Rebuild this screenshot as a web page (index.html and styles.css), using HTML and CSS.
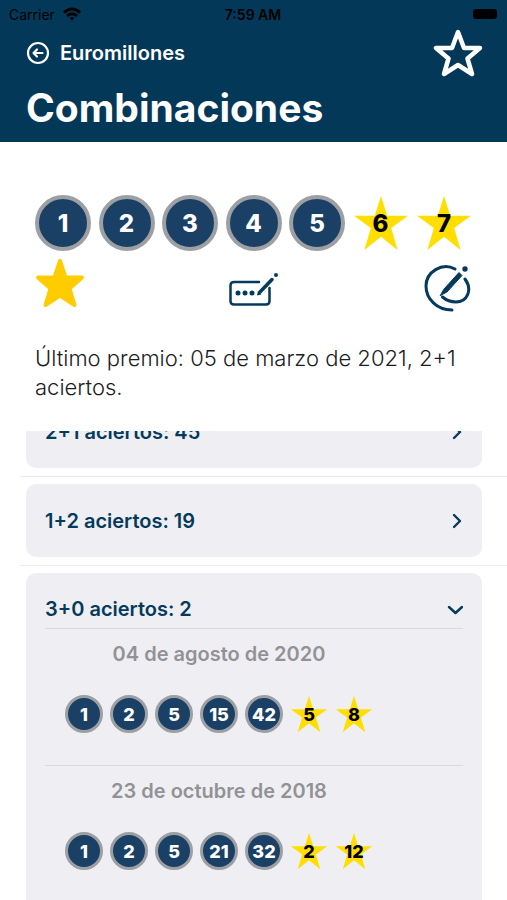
FILE: index.html
```
<!DOCTYPE html>
<html lang="es">
<head>
    <meta charset="UTF-8">
    <meta name="viewport" content="width=device-width, initial-scale=1.0">
    <title>Euromillones - Combinaciones</title>
    <link rel="stylesheet" href="styles.css">
</head>
<body>
    <!-- Shared star shape for the lucky numbers -->
    <svg class="defs" aria-hidden="true">
        <symbol id="star" viewBox="0 0 55 55">
            <path d="M27.500 1 L33.600 20.500 H54 L37.500 32.500 L43.800 54 L27.500 41 L11.200 54 L17.500 32.500 L1 20.500 H21.400 Z" fill="#ffde00"/>
        </symbol>
    </svg>

    <div class="app">
        <header class="header">
            <div class="status-bar">
                <span class="carrier">
                    Carrier
                    <svg width="18" height="14" viewBox="0 0 18 14" fill="none" stroke="#000" stroke-width="3">
                        <path d="M1 5.500 Q9 -1.500 17 5.500"/>
                        <path d="M4 9 Q9 4.500 14 9"/>
                        <path d="M6.500 11 Q9 8.800 11.500 11 L9 13.800 Z" fill="#000" stroke="none"/>
                    </svg>
                </span>
                <span class="clock">7:59 AM</span>
                <span class="battery"></span>
            </div>
            <div class="nav">
                <a class="back" href="#">
                    <svg width="24" height="24" viewBox="0 0 24 24" fill="none" stroke="#fff" stroke-width="2.200" stroke-linecap="round" stroke-linejoin="round">
                        <circle cx="12" cy="12" r="10"/>
                        <path d="M16.500 12 H7.500 M11 8.500 L7.500 12 L11 15.500"/>
                    </svg>
                    Euromillones
                </a>
                <button class="icon-btn" type="button" aria-label="Favoritos">
                    <svg width="50" height="48" viewBox="0 0 50 48" fill="none" stroke="#fff" stroke-width="4.500" stroke-linejoin="round">
                        <path d="M25 3 L31 19 H47 L34.500 29.500 L39 45 L25 36 L11 45 L15.500 29.500 L3 19 H19 Z"/>
                    </svg>
                </button>
            </div>
            <h1>Combinaciones</h1>
        </header>

        <section class="current">
            <div class="numbers">
                <span class="ball">1</span>
                <span class="ball">2</span>
                <span class="ball">3</span>
                <span class="ball">4</span>
                <span class="ball">5</span>
                <span class="star"><svg><use href="#star"/></svg><b>6</b></span>
                <span class="star"><svg><use href="#star"/></svg><b>7</b></span>
            </div>
            <div class="actions">
                <button class="icon-btn" type="button" aria-label="Guardar favorita">
                    <svg width="50" height="54" viewBox="0 0 50 54" fill="#ffcc00" stroke="#ffcc00" stroke-width="4" stroke-linejoin="round">
                        <path d="M25 3 L30.500 19.500 H47 L34.500 30.500 L39.500 47 L25 37.500 L10.500 47 L15.500 30.500 L3 19.500 H19.500 Z"/>
                    </svg>
                </button>
                <button class="icon-btn" type="button" aria-label="Editar números">
                    <svg width="50" height="54" viewBox="0 -4 50 54" fill="none" stroke="#053a5c" stroke-width="2.500" stroke-linecap="round">
                        <path d="M30 20 H5 Q1.500 20 1.500 23.500 V39 Q1.500 42.500 5 42.500 H37 Q40.500 42.500 40.500 39 V26"/>
                        <path d="M31 30 L43 17.500" stroke-width="3.500"/>
                        <g fill="#053a5c" stroke="none">
                            <path d="M28 33.500 L29 29 L32.500 32.500 Z"/>
                            <circle cx="9" cy="31" r="2.500"/>
                            <circle cx="16" cy="31" r="2.500"/>
                            <circle cx="23" cy="31" r="2.500"/>
                            <circle cx="47" cy="13" r="2"/>
                        </g>
                    </svg>
                </button>
                <button class="icon-btn" type="button" aria-label="Firmar">
                    <svg width="50" height="54" viewBox="0 -4 50 54" fill="none" stroke="#053a5c" stroke-width="3" stroke-linecap="round">
                        <path d="M33 7 C20 0 4 10 4 24 C4 37 15 48 30 48"/>
                        <path d="M43 17 C51 28 45 40 34 40 C29 40 24 38 20.500 35"/>
                        <path d="M22 27 L37 10.500 L40 13.500 L25 30 L18.500 33.500 Z" fill="#053a5c" stroke-width="1"/>
                        <circle cx="43" cy="7" r="2.700" fill="#053a5c" stroke="none"/>
                    </svg>
                </button>
            </div>
            <p class="last-prize">Último premio: 05 de marzo de 2021, 2+1 aciertos.</p>
        </section>

        <ul class="results">
            <li>
                <div class="card">
                    <button class="card-title" type="button">
                        2+1 aciertos: 45
                        <svg width="16" height="16" viewBox="0 0 16 16"><path d="M7 2 L13 8 L7 14"/></svg>
                    </button>
                </div>
            </li>
            <li>
                <div class="card">
                    <button class="card-title" type="button">
                        1+2 aciertos: 19
                        <svg width="16" height="16" viewBox="0 0 16 16"><path d="M7 2 L13 8 L7 14"/></svg>
                    </button>
                </div>
            </li>
            <li>
                <div class="card">
                    <button class="card-title" type="button" aria-expanded="true">
                        3+0 aciertos: 2
                        <svg width="16" height="16" viewBox="0 0 16 16"><path d="M2 6 L8.500 12 L15 6"/></svg>
                    </button>
                    <div class="draw">
                        <h2>04 de agosto de 2020</h2>
                        <div class="numbers small">
                            <span class="ball">1</span>
                            <span class="ball">2</span>
                            <span class="ball">5</span>
                            <span class="ball">15</span>
                            <span class="ball">42</span>
                            <span class="star"><svg><use href="#star"/></svg><b>5</b></span>
                            <span class="star"><svg><use href="#star"/></svg><b>8</b></span>
                        </div>
                    </div>
                    <div class="draw">
                        <h2>23 de octubre de 2018</h2>
                        <div class="numbers small">
                            <span class="ball">1</span>
                            <span class="ball">2</span>
                            <span class="ball">5</span>
                            <span class="ball">21</span>
                            <span class="ball">32</span>
                            <span class="star"><svg><use href="#star"/></svg><b>2</b></span>
                            <span class="star"><svg><use href="#star"/></svg><b>12</b></span>
                        </div>
                    </div>
                </div>
            </li>
        </ul>
    </div>
</body>
</html>
```
FILE: styles.css
```
* {
    box-sizing: border-box;
}
body {
    margin: 0;
    font-family: Inter, "Liberation Sans", sans-serif;
    background: #fff;
    color: #1c1c1e;
}
button {
    font: inherit;
    color: inherit;
    background: none;
    border: 0;
    padding: 0;
    cursor: pointer;
}
svg {
    display: block;
}
.defs {
    display: none;
}
.app {
    display: flex;
    flex-direction: column;
    height: 100vh;
}

/* Header */
.header {
    flex: none;
    padding-bottom: 10px;
    background: #033859;
    color: #fff;
}
.status-bar {
    display: grid;
    grid-template-columns: 1fr auto 1fr;
    align-items: center;
    height: 28px;
    padding: 0 10px 0 9px;
    color: #000;
    font-size: 14px;
}
.carrier {
    display: flex;
    align-items: center;
    gap: 8px;
}
.clock {
    font-weight: 600;
}
.battery {
    justify-self: end;
    width: 24px;
    height: 10px;
    border-radius: 3px;
    background: #000;
}
.nav {
    display: flex;
    align-items: center;
    justify-content: space-between;
    height: 50px;
    padding: 0 24px 0 26px;
}
.back {
    display: flex;
    align-items: center;
    gap: 10px;
    color: #fff;
    font-size: 20px;
    font-weight: 600;
    text-decoration: none;
}
h1 {
    margin: 6px 26px 0;
    font-size: 39px;
    line-height: 48px;
    font-weight: 700;
}

/* Current combination */
.current {
    flex: none;
    padding: 53px 35px 29px;
}
.numbers {
    display: flex;
    justify-content: space-between;
    font-size: 24px;
    font-weight: 800;
}
.ball,
.star {
    display: grid;
    place-items: center;
    width: 56px;
    height: 56px;
}
.ball {
    border: 4px solid #9c9fa3;
    border-radius: 50%;
    background: #1a4065;
    color: #fff;
}
.star {
    color: #000;
}
.star svg,
.star b {
    grid-area: 1 / 1;
    font-weight: inherit;
}
.star svg {
    width: 100%;
    height: 100%;
}
.actions {
    display: flex;
    justify-content: space-between;
    padding-top: 7px;
}
.last-prize {
    margin: 32px 0 0;
    font-size: 22px;
    line-height: 29px;
    font-weight: 300;
}

/* Results list */
.results {
    flex: 1;
    min-height: 0;
    overflow: hidden;
    margin: 0;
    padding: 0 0 0 20px;
    list-style: none;
}
.results li {
    padding: 7px 25px 8px 6px;
    border-bottom: 1px solid #ececee;
}
/* the list is scrolled part of the way through its first card */
.results li:first-child {
    margin-top: -43px;
}
.card {
    padding: 0 19px;
    border-radius: 10px;
    background: #efeff3;
}
.card-title {
    display: flex;
    align-items: center;
    justify-content: space-between;
    width: 100%;
    height: 73px;
    color: #053a5c;
    font-size: 20px;
    font-weight: 600;
}
.card-title[aria-expanded] {
    height: 55px;
    padding-top: 17px;
}
.card-title path {
    fill: none;
    stroke: #053a5c;
    stroke-width: 2.4;
    stroke-linecap: round;
    stroke-linejoin: round;
}
.draw {
    border-top: 1px solid #d9d9de;
    padding: 10px 20px 32px;
}
.draw:last-child {
    padding-bottom: 56px;
}
.draw h2 {
    width: 308px;
    margin: 0 0 26px;
    color: #929296;
    font-size: 20px;
    line-height: 30px;
    font-weight: 600;
    text-align: center;
}
.small {
    justify-content: flex-start;
    gap: 7px;
    font-size: 18px;
}
.small .ball,
.small .star {
    width: 38px;
    height: 38px;
}
.small .ball {
    border-width: 3px;
}
```
